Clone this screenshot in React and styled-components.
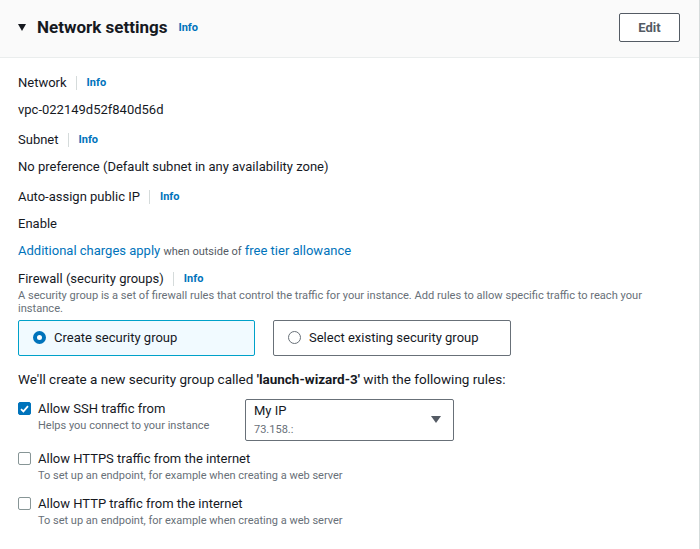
import React from "react";
import styled, { createGlobalStyle } from "styled-components";

const GlobalStyle = createGlobalStyle`
  html, body {
    margin: 0;
    padding: 0;
    background: #ffffff;
  }
  body {
    font-family: Roboto, "Liberation Sans", Arial, sans-serif;
    color: #16191f;
    -webkit-font-smoothing: antialiased;
  }
`;

const Panel = styled.section`
  width: 700px;
  height: 549px;
  box-sizing: border-box;
  border-right: 1px solid #d5dbdb;
  background: #fff;
  overflow: hidden;
`;

const Header = styled.header`
  height: 58px;
  box-sizing: border-box;
  background: #fafafa;
  border-bottom: 1px solid #eaeded;
  display: flex;
  align-items: center;
  justify-content: space-between;
  padding: 0 19px 3px 18px;
`;

const TitleGroup = styled.div`
  display: flex;
  align-items: center;
`;

const Caret = styled.svg`
  width: 8px;
  height: 7px;
  margin-right: 11px;
`;

const Title = styled.h2`
  margin: 0;
  font-size: 17px;
  font-weight: 700;
  color: #16191f;
`;

const InfoLink = styled.a`
  font-size: 11px;
  font-weight: 700;
  color: #0073bb;
  text-decoration: none;
  margin-left: ${(p) => (p.$plain ? "11px" : "0")};
`;

const EditButton = styled.button`
  width: 61px;
  height: 29px;
  border: 1px solid #545b64;
  border-radius: 2px;
  background: #fff;
  color: #545b64;
  font-family: inherit;
  font-size: 13px;
  font-weight: 700;
  padding: 0;
`;

const Body = styled.div`
  padding: 15px 18px 0 18px;
`;

const Field = styled.div`
  margin-bottom: ${(p) => p.$mb ?? 10.5}px;
`;

const Label = styled.div`
  display: flex;
  align-items: center;
  font-size: 13px;
  line-height: 20px;
`;

const Divider = styled.span`
  display: inline-block;
  width: 1px;
  height: 14px;
  background: #d5dbdb;
  margin: 0 10px 0 9px;
`;

const Value = styled.div`
  font-size: 13px;
  line-height: 20px;
  margin-top: 6.5px;
`;

const Charges = styled.div`
  font-size: 13px;
  line-height: 20px;
  margin-bottom: 7px;
  color: #545b64;
`;

const BlueText = styled.a`
  color: #0073bb;
  text-decoration: none;
`;

const SmallGrey = styled.span`
  font-size: 11px;
`;

const Description = styled.p`
  margin: 0;
  font-size: 11.1px;
  line-height: 13px;
  color: #687078;
  padding-right: 14px;
`;

const Choices = styled.div`
  display: flex;
  gap: 18px;
  margin-top: 5px;
`;

const ChoiceCard = styled.label`
  width: ${(p) => p.$w}px;
  height: 36px;
  box-sizing: border-box;
  display: flex;
  align-items: center;
  gap: 8px;
  padding-left: 14px;
  border: 1px solid ${(p) => (p.$selected ? "#00a1c9" : "#687078")};
  background: ${(p) => (p.$selected ? "#f1faff" : "#fff")};
  border-radius: 2px;
  font-size: 13px;
`;

const RadioDot = styled.span`
  width: 13px;
  height: 13px;
  box-sizing: border-box;
  border-radius: 50%;
  border: ${(p) => (p.$on ? "4px solid #0073bb" : "1px solid #687078")};
  background: #fff;
`;

const Note = styled.p`
  margin: 13px 0 0 0;
  font-size: 13.5px;
  line-height: 20px;
`;

const RuleRow = styled.div`
  display: flex;
  align-items: flex-start;
  margin-top: ${(p) => p.$mt}px;
`;

const RuleText = styled.div`
  width: ${(p) => (p.$w ? `${p.$w}px` : "auto")};
`;

const CheckLine = styled.div`
  display: flex;
  align-items: center;
  gap: 7px;
  font-size: 13px;
  line-height: 18px;
`;

const Box = styled.span`
  width: 13px;
  height: 13px;
  box-sizing: border-box;
  border-radius: 2px;
  border: 1px solid ${(p) => (p.$on ? "#0073bb" : "#879596")};
  background: ${(p) => (p.$on ? "#0073bb" : "#fff")};
  display: flex;
  align-items: center;
  justify-content: center;
`;

const RuleHint = styled.div`
  margin-left: 20px;
  font-size: 11px;
  line-height: 16px;
  color: #687078;
`;

const Select = styled.div`
  width: 209px;
  height: 42px;
  box-sizing: border-box;
  margin-top: -1px;
  border: 1px solid #687078;
  border-radius: 2px;
  padding: 0 12px 0 8px;
  display: flex;
  align-items: center;
  justify-content: space-between;
`;

const SelectText = styled.div`
  display: flex;
  flex-direction: column;
`;

const SelectMain = styled.span`
  font-size: 13px;
  line-height: 18px;
  margin-bottom: 2px;
`;

const SelectSub = styled.span`
  font-size: 11px;
  line-height: 16px;
  color: #687078;
`;

const Check = () => (
  <svg width="9" height="8" viewBox="0 0 9 8">
    <path d="M1 4.2 L3.4 6.4 L8 1.2" fill="none" stroke="#fff" strokeWidth="1.8" />
  </svg>
);

const Info = () => <InfoLink href="#">Info</InfoLink>;

const FieldLabel = ({ children }) => (
  <Label>
    {children}
    <Divider />
    <Info />
  </Label>
);

const rules = [
  { label: "Allow HTTPS traffic from the internet", mt: 9 },
  { label: "Allow HTTP traffic from the internet", mt: 11 },
];

export default function App() {
  return (
    <>
      <GlobalStyle />
      <Panel>
        <Header>
          <TitleGroup>
            <Caret viewBox="0 0 8 7">
              <path d="M0 0 L8 0 L4 7 Z" fill="#16191f" />
            </Caret>
            <Title>Network settings</Title>
            <InfoLink href="#" $plain>
              Info
            </InfoLink>
          </TitleGroup>
          <EditButton>Edit</EditButton>
        </Header>
        <Body>
          <Field>
            <FieldLabel>Network</FieldLabel>
            <Value>vpc-022149d52f840d56d</Value>
          </Field>
          <Field>
            <FieldLabel>Subnet</FieldLabel>
            <Value>No preference (Default subnet in any availability zone)</Value>
          </Field>
          <Field $mb={7}>
            <FieldLabel>Auto-assign public IP</FieldLabel>
            <Value>Enable</Value>
          </Field>
          <Charges>
            <BlueText href="#">Additional charges apply</BlueText>{" "}
            <SmallGrey>when outside of</SmallGrey>{" "}
            <BlueText href="#">free tier allowance</BlueText>
          </Charges>
          <FieldLabel>Firewall (security groups)</FieldLabel>
          <Description>
            A security group is a set of firewall rules that control the traffic
            for your instance. Add rules to allow specific traffic to reach your
            instance.
          </Description>
          <Choices>
            <ChoiceCard $w={237} $selected>
              <RadioDot $on />
              Create security group
            </ChoiceCard>
            <ChoiceCard $w={238}>
              <RadioDot />
              Select existing security group
            </ChoiceCard>
          </Choices>
          <Note>
            We'll create a new security group called{" "}
            <b>'launch-wizard-3'</b> with the following rules:
          </Note>
          <RuleRow $mt={11}>
            <RuleText $w={227}>
              <CheckLine>
                <Box $on>
                  <Check />
                </Box>
                Allow SSH traffic from
              </CheckLine>
              <RuleHint>Helps you connect to your instance</RuleHint>
            </RuleText>
            <Select>
              <SelectText>
                <SelectMain>My IP</SelectMain>
                <SelectSub>73.158.:</SelectSub>
              </SelectText>
              <svg width="10" height="7" viewBox="0 0 10 7">
                <path d="M0 0 L10 0 L5 7 Z" fill="#545b64" />
              </svg>
            </Select>
          </RuleRow>
          {rules.map((r) => (
            <RuleRow key={r.label} $mt={r.mt}>
              <RuleText>
                <CheckLine>
                  <Box />
                  {r.label}
                </CheckLine>
                <RuleHint>
                  To set up an endpoint, for example when creating a web server
                </RuleHint>
              </RuleText>
            </RuleRow>
          ))}
        </Body>
      </Panel>
    </>
  );
}
